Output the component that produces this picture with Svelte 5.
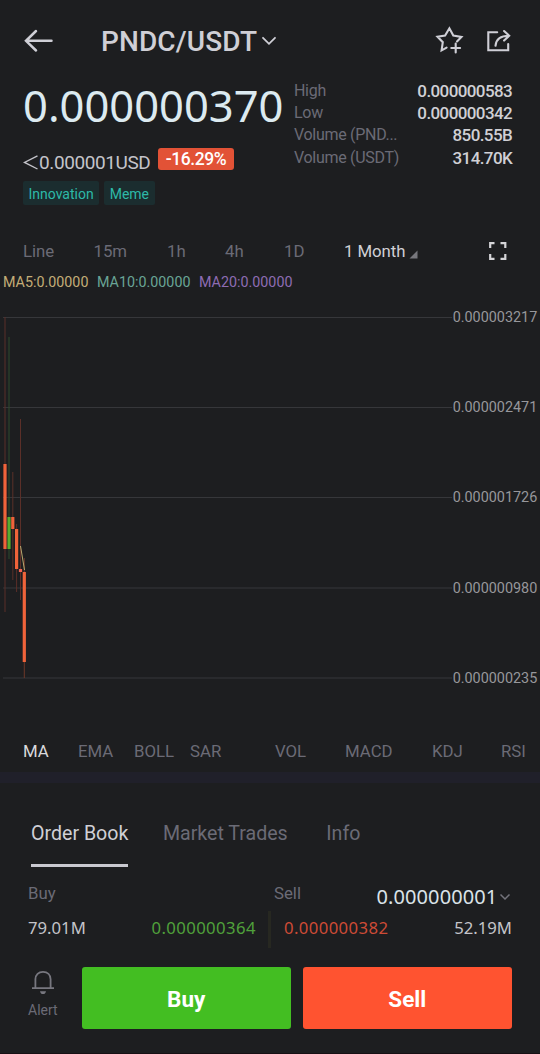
<script>
  const stats = [
    ['High', '0.000000583'],
    ['Low', '0.000000342'],
    ['Volume (PND...', '850.55B'],
    ['Volume (USDT)', '314.70K']
  ];
  const frames = ['Line', '15m', '1h', '4h', '1D'];
  const indicators = ['MA', 'EMA', 'BOLL', 'SAR', 'VOL', 'MACD', 'KDJ', 'RSI'];
  const levels = [
    [17.5, '0.000003217'],
    [107.5, '0.000002471'],
    [197.5, '0.000001726'],
    [288, '0.000000980'],
    [378, '0.000000235']
  ];
  const red = '#f0633a';
  const green = '#58ad2f';
  const redWick = '#5b2f28';
  const greenWick = '#2f4a2c';
  // x, body top, body bottom, wick top, wick bottom, body colour, wick colour
  const candles = [
    [5, 164, 249, 17, 312, red, redWick],
    [9, 217, 249, 37, 259, green, greenWick],
    [12.8, 217, 229, 172, 280, red, redWick],
    [16.6, 229, 269, 224, 292, red, redWick],
    [20.5, 269, 272, 119, 300, '#ef6250', redWick],
    [24.3, 272, 362, 258, 378, red, '#6d3828']
  ];
</script>

<div class="screen">
  <header>
    <svg class="back" width="30" height="24" viewBox="0 0 30 24"><path d="M13 2 3 11.8 13 21.5M3.4 11.8H28.5" /></svg>
    <h1>PNDC/USDT</h1>
    <svg class="caret" width="16" height="12" viewBox="0 0 16 12"><path d="m2 2.8 6 6 6-6" /></svg>
    <svg class="star" width="30" height="30" viewBox="0 0 30 30">
      <path d="M11.6 21.6 6.6 24.4 7.8 16.2 2.5 10.7 10.1 9.5 14.4 2.3 18.3 9.5 26.4 11 22 15.4M20.7 17.6V26.4M16.3 22H25.1" />
    </svg>
    <svg class="share" width="28" height="28" viewBox="0 0 28 28">
      <path d="M12.2 5.3H3.3V23.2H23.2V17M10.5 18.8C11 12.8 15 8.8 24 8.8M19.1 4 24.2 8.8 19.1 13.6" />
    </svg>
  </header>

  <section class="summary">
    <div class="quote">
      <div class="price">0.000000370</div>
      <div class="fiat">
        <svg width="16" height="18" viewBox="0 0 16 18"><path d="M14.5 1.8 1.5 8.4 14.5 15" /></svg>
        <span class="usd">0.000001USD</span>
        <span class="change">-16.29%</span>
      </div>
      <div class="tags"><span>Innovation</span><span>Meme</span></div>
    </div>
    <dl>
      {#each stats as [label, value]}
        <div><dt>{label}</dt><dd>{value}</dd></div>
      {/each}
    </dl>
  </section>

  <nav class="frames">
    {#each frames as f}<span>{f}</span>{/each}
    <span class="on">1 Month<svg width="9" height="9" viewBox="0 0 9 9"><path d="M8.5.5v8H.5z" /></svg></span>
    <svg class="full" width="20" height="20" viewBox="0 0 20 20">
      <path d="M2.2 7V2.2H6.5M12.5 2.2H17.3V7M17.3 13V17.8H12.5M6.5 17.8H2.2V13" />
    </svg>
  </nav>

  <div class="averages">
    <span class="ma5">MA5:0.00000</span><span class="ma10">MA10:0.00000</span><span class="ma20">MA20:0.00000</span>
  </div>

  <svg class="chart" width="540" height="400" viewBox="0 0 540 400">
    {#each levels as [y, label]}
      <path d="M3 {y}H452" stroke="#36373a" />
      <text x="537.3" y={y + 4.8} text-anchor="end">{label}</text>
    {/each}
    {#each candles as [x, top, bottom, high, low, body, wick]}
      <path d="M{x} {high}V{low}" stroke={wick} />
      <rect x={x - 1.6} y={top} width="3.2" height={bottom - top} fill={body} />
    {/each}
    <path d="M20.5 246 24.5 270" stroke="#bba96f" fill="none" />
  </svg>

  <nav class="indicators">
    {#each indicators as name, i}<span class:on={i === 0}>{name}</span>{/each}
  </nav>
  <div class="band"></div>

  <nav class="tabs"><span class="on">Order Book</span><span>Market Trades</span><span>Info</span></nav>

  <section class="book">
    <div class="head">
      <span>Buy</span><span>Sell</span>
      <span class="step">0.000000001<svg width="12" height="8" viewBox="0 0 12 8"><path d="m1.5 1.5 4.5 4.5 4.5-4.5" /></svg></span>
    </div>
    <div class="row">
      <span>79.01M</span><span class="bid">0.000000364</span><i></i><span class="ask">0.000000382</span><span class="amount">52.19M</span>
    </div>
  </section>

  <footer>
    <div class="alert">
      <svg width="24" height="26" viewBox="0 0 24 26">
        <path d="M1 18.2H23M4.4 18V9.3C4.4 4.6 7.6 1.8 12 1.8S19.6 4.6 19.6 9.3V18" />
        <path class="clapper" d="M9 21.2H15C14.6 23.2 13.5 24 12 24S9.4 23.2 9 21.2Z" />
      </svg>
      <span>Alert</span>
    </div>
    <button class="buy">Buy</button>
    <button class="sell">Sell</button>
  </footer>
</div>

<style>
  :global(body) { background: #1d1e20; }
  .screen {
    box-sizing: border-box; width: 540px; height: 1054px; overflow: hidden;
    display: flex; flex-direction: column;
    background: #1d1e20; border-bottom: 1px solid #171014;
    color: #6b6b76; font-family: Roboto, sans-serif; white-space: nowrap;
  }
  .screen > * { flex: none; }
  svg { display: block; fill: none; }

  header { height: 82px; box-sizing: border-box; padding-left: 24px; display: flex; align-items: center; stroke: #cfcfd6; stroke-width: 2.5; }
  h1 { margin: 2px 0 0 48px; width: 160px; font-size: 28px; font-weight: 500; line-height: 36px; color: #cfcfd6; stroke: none; letter-spacing: .1px; }
  .back { margin-left: -1px; }
  .caret { stroke-width: 1.8; }
  .star { margin-left: 158px; }
  .share { margin-left: 20px; }
  header path { stroke-linecap: round; }
  .star, .share { stroke-width: 2.1; }

  .summary { height: 142px; display: flex; }
  .quote { width: 271px; padding-left: 23px; }
  .price { margin-top: -2px; height: 50px; line-height: 50px; font-family: "Noto Sans", sans-serif; font-size: 43.5px; color: #dceaf0; }
  .fiat { height: 24px; margin-top: 18px; display: flex; align-items: flex-start; }
  .fiat svg { margin-top: 6px; stroke: #c4c4ca; stroke-width: 1.4; }
  .usd { width: 119px; margin-top: 3px; line-height: 24px; font-size: 19px; color: #c4c4ca; letter-spacing: -.4px; }
  .change { width: 76px; height: 22px; line-height: 23px; border-radius: 3px; background: #e25236; color: #fff; text-align: center; font-size: 17.5px; font-weight: 500; letter-spacing: -.4px; }
  .tags { display: flex; gap: 5px; margin-top: 9px; }
  .tags span { padding: 0 5.5px; height: 24px; line-height: 26px; border-radius: 2px; background: #1b2d2f; color: #2db9a8; font-size: 14px; }

  dl { margin: -2.5px 0 0; width: 217.5px; font-size: 17px; line-height: 22.4px; }
  dl div { display: flex; justify-content: space-between; }
  dt { font-size: 16px; letter-spacing: -.3px; }
  dd { margin: 0 -.6px 0 0; color: #d0d0d5; font-weight: 500; letter-spacing: -.6px; }

  .frames { height: 54px; display: grid; grid-template-columns: 70.5px 73.5px 58px 59px 60px 144px 20px; align-items: center; padding-left: 23px; font-size: 16.8px; letter-spacing: -.05px; }
  .frames .on { display: flex; align-items: flex-end; gap: 4px; color: #d0d0d5; }
  .on svg { margin-bottom: 2px; fill: #77777c; }
  .full { stroke: #d5d5d8; stroke-width: 2.2; }

  .averages { height: 22px; margin: -7px 0 7px; display: grid; grid-template-columns: 94px 102px 100px; padding-left: 3px; line-height: 22px; font-size: 14.3px; }
  .ma5 { color: #c3ad77; }
  .ma10 { color: #69a596; }
  .ma20 { color: #8e6cb3; }

  .chart text { font-size: 14.4px; fill: #97979b; }

  .indicators { height: 52px; margin-top: 20px; display: grid; grid-template-columns: 55px 56px 56px 85px 70px 87px 69px 30px; padding-left: 23px; line-height: 62px; font-size: 16.8px; }
  .indicators .on { color: #d9d9dc; }
  .band { height: 11px; background: #20202a; }

  .tabs { height: 84px; display: flex; padding-left: 31px; gap: 34.5px; line-height: 101px; font-size: 19.6px; }
  .tabs span { height: 81px; }
  .tabs .on { color: #d0d0d6; border-bottom: 3px solid #c9c9d0; }
  .tabs span:last-child { margin-left: 4px; }

  .book { height: 100px; }
  .head { height: 44px; display: grid; grid-template-columns: 246px 102.5px 135.5px; padding: 4px 0 0 28px; font-size: 16.8px; line-height: 44px; }
  .step { display: flex; align-items: center; gap: 2px; font-family: "Noto Sans", sans-serif; font-size: 20px; letter-spacing: .1px; color: #dae3e8; line-height: 52px; }
  .step svg { stroke: #74747c; stroke-width: 1.5; }
  .row { display: grid; grid-template-columns: 123.5px 116.5px 16px 104px 124px; height: 38px; line-height: 33px; margin-top: -4px; padding-left: 28px; font-family: "Noto Sans", sans-serif; font-size: 16.7px; color: #c4c4c9; }
  .row i { width: 3px; height: 37px; background: #272821; }
  .bid { color: #50a13b; letter-spacing: .4px; }
  .ask { color: #cd4b36; letter-spacing: .4px; }
  .amount { text-align: right; }

  footer { display: flex; padding-left: 24px; }
  .alert { width: 57.5px; padding-top: 3px; font-size: 14px; }
  .alert svg { margin-left: 7px; stroke: #77777f; stroke-width: 1.8; }
  .alert span { display: block; margin-left: 4px; margin-top: 6px; line-height: 16px; }
  .alert .clapper { fill: #77777f; stroke: none; }
  button { width: 209.5px; height: 62px; padding: 2px 0 0; border: 0; border-radius: 3px; font: 700 22.5px Roboto, sans-serif; color: #fff; }
  .buy { background: #43be22; }
  .sell { background: #ff5330; margin-left: 11.5px; }
</style>
